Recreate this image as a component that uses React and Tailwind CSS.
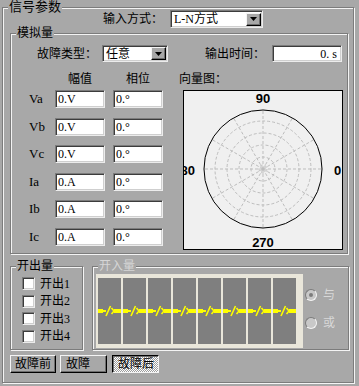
import React from 'react';

const groove = 'border border-[#7c7c7c] shadow-[1px_1px_0_#f4f4f4,inset_1px_1px_0_#f4f4f4]';
const sunken = 'bg-white border border-[#7c7c7c] border-r-[#ececec] border-b-[#ececec] shadow-[inset_1px_1px_0_#3c3c3c,inset_-1px_-1px_0_#cfcfcf]';
const raised = 'bg-[#a8a8a8] border border-[#f4f4f4] border-r-black border-b-black shadow-[inset_-1px_-1px_0_#6e6e6e]';

const Combo = ({ value, className }) => (
  <div className={`flex items-center pl-[3px] ${sunken} ${className}`}>
    <span className="flex-1 whitespace-nowrap">{value}</span>
    <div className={`mr-[1px] flex h-[13px] w-[15px] items-center justify-center ${raised}`}>
      <svg width="7" height="4" viewBox="0 0 7 4">
        <path d="M0 0h7L3.5 4z" fill="#000" />
      </svg>
    </div>
  </div>
);

const rows = [
  ['Va', '0.V'],
  ['Vb', '0.V'],
  ['Vc', '0.V'],
  ['Ia', '0.A'],
  ['Ib', '0.A'],
  ['Ic', '0.A'],
];

const Polar = () => {
  const cx = 79;
  const cy = 78;
  const angles = [0, 30, 60, 90, 120, 150, 180, 210, 240, 270, 300, 330];
  return (
    <svg width="158" height="158" viewBox="0 0 158 158">
      {[48, 36, 24, 12, 4].map(r => (
        <circle key={r} cx={cx} cy={cy} r={r} fill="none" stroke="#bdbdbd" strokeDasharray="3 2" />
      ))}
      {angles.map(a => {
        const t = (a * Math.PI) / 180;
        return (
          <line
            key={a}
            x1={cx}
            y1={cy}
            x2={cx + 59 * Math.cos(t)}
            y2={cy - 59 * Math.sin(t)}
            stroke="#bdbdbd"
            strokeDasharray="3 2"
          />
        );
      })}
      <circle cx={cx} cy={cy} r="59" fill="none" stroke="#000" />
      <g fontFamily="Liberation Sans, sans-serif" fontWeight="bold" fontSize="13" fill="#000">
        <text x={cx} y="12" textAnchor="middle">90</text>
        <text x={cx} y="156" textAnchor="middle">270</text>
        <text x="150" y="84">0</text>
        <text x="11" y="84" textAnchor="end">180</text>
      </g>
    </svg>
  );
};

// yellow "-=/>-" open contact mark
const SwitchIcon = () => (
  <svg width="23" height="12" viewBox="0 0 23 12">
    <rect x="0" y="4" width="5" height="4" fill="#ffff00" />
    <rect x="5" y="5" width="3" height="2" fill="#ffff00" />
    <line x1="8" y1="11" x2="12.5" y2="1" stroke="#ffff00" strokeWidth="1.6" />
    <path d="M13.5 3l2.5 3-2.5 3" fill="none" stroke="#ffff00" strokeWidth="1.6" />
    <rect x="16" y="4" width="7" height="4" fill="#ffff00" />
  </svg>
);

export default function App() {
  return (
    <div className="h-[386px] w-[359px] overflow-hidden bg-[#a8a8a8] text-[12px] leading-[14px] text-black font-['Liberation_Serif','Noto_Sans_CJK_SC',serif]">
      <fieldset className={`ml-[2px] h-[383px] w-[352px] ${groove}`}>
        <legend className="ml-[5px] bg-[#a8a8a8] px-[1px] text-[13px]">信号参数</legend>

        <div className="-mt-[4px] flex h-[18px] items-center pl-[100px]">
          <span className="w-[67px]">输入方式：</span>
          <Combo className="h-[18px] w-[93px]" value="L-N方式" />
        </div>

        {/* 模拟量 */}
        <fieldset className={`-mt-[2px] ml-[7px] h-[228px] w-[338px] ${groove}`}>
          <legend className="ml-[5px] bg-[#a8a8a8] px-[1px]">模拟量</legend>

          <div className="mt-[5px] flex h-[17px] items-center">
            <span className="ml-[26px] w-[65px]">故障类型：</span>
            <Combo className="h-[17px] w-[66px]" value="任意" />
            <span className="ml-[37px] w-[67px]">输出时间：</span>
            <div className={`flex h-[17px] w-[70px] items-center justify-end pr-[4px] ${sunken}`}>0. s</div>
          </div>

          <div className="mt-[10px] flex">
            <div className="flex flex-col">
              <div className="flex h-[14px]">
                <span className="w-[44px]" />
                <span className="w-[50px] text-center">幅值</span>
                <span className="ml-[8px] w-[50px] text-center">相位</span>
              </div>
              <div className="mt-[4px] flex flex-col gap-[9.6px]">
                {rows.map(([name, val]) => (
                  <div key={name} className="flex h-[18px] items-center">
                    <span className="w-[44px] pl-[18px] text-[13px]">{name}</span>
                    <div className={`flex h-[18px] w-[50px] items-center pl-[2px] ${sunken}`}>{val}</div>
                    <div className={`ml-[8px] flex h-[18px] w-[50px] items-center pl-[2px] ${sunken}`}>0.°</div>
                  </div>
                ))}
              </div>
            </div>

            <div className="ml-[16px] flex flex-col">
              <span className="h-[14px]">向量图：</span>
              <div className="ml-[4px] mt-[4px] h-[160px] w-[160px] overflow-hidden border border-black bg-[#f0f0f0]">
                <Polar />
              </div>
            </div>
          </div>
        </fieldset>

        <div className="mt-[5px] flex">
          {/* 开出量 */}
          <fieldset className={`ml-[7px] h-[91px] w-[73px] ${groove}`}>
            <legend className="ml-[5px] bg-[#a8a8a8] px-[1px]">开出量</legend>
            <div className="mt-[4px] flex flex-col gap-[4.67px] pl-[11px]">
              {['开出1', '开出2', '开出3', '开出4'].map(t => (
                <div key={t} className="flex h-[13px] items-center">
                  <span className={`h-[13px] w-[13px] ${sunken}`} />
                  <span className="ml-[5px] whitespace-nowrap">{t}</span>
                </div>
              ))}
            </div>
          </fieldset>

          {/* 开入量 */}
          <fieldset className={`ml-[9px] h-[91px] w-[257px] ${groove}`}>
            <legend className="ml-[5px] bg-[#a8a8a8] px-[1px] text-[#d6d6d6]">开入量</legend>
            <div className="flex">
              <div className="ml-[3px] mt-[1px] flex h-[74px] w-[207px] gap-[2px] bg-[#e9e6da] pl-[2px] pt-[4px]">
                {[0, 1, 2, 3, 4, 5, 6, 7].map(i => (
                  <div key={i} className="flex h-[66px] w-[23px] items-center bg-[#7f7f7f]">
                    <SwitchIcon />
                  </div>
                ))}
              </div>
              <div className="ml-[2px] mt-[16px] flex flex-col gap-[16px] text-[#d8d8d8]">
                <div className="flex h-[12px] items-center">
                  <span className="flex h-[12px] w-[12px] items-center justify-center rounded-full border border-[#7c7c7c] border-r-[#f4f4f4] border-b-[#f4f4f4] bg-[#c8c8c8]">
                    <span className="h-[4px] w-[4px] rounded-full bg-[#7c7c7c]" />
                  </span>
                  <span className="ml-[6px]">与</span>
                </div>
                <div className="flex h-[12px] items-center">
                  <span className="h-[12px] w-[12px] rounded-full border border-[#7c7c7c] border-r-[#f4f4f4] border-b-[#f4f4f4] bg-[#c8c8c8]" />
                  <span className="ml-[6px]">或</span>
                </div>
              </div>
            </div>
          </fieldset>
        </div>

        <div className="mt-[5px] flex pl-[7px]">
          <button className={`h-[18px] w-[46px] pl-[4px] text-left ${raised}`}>故障前</button>
          <button className={`ml-[4px] h-[18px] w-[47px] pl-[5px] text-left ${raised}`}>故障</button>
          <button className="ml-[5px] h-[18px] w-[47px] border border-black border-r-[#f4f4f4] border-b-[#f4f4f4] bg-[repeating-conic-gradient(#ffffff_0_25%,#9c9c9c_0_50%)] bg-size-[2px_2px] pl-[5px] text-left shadow-[inset_1px_1px_0_#6e6e6e]">
            故障后
          </button>
        </div>
      </fieldset>
    </div>
  );
}
